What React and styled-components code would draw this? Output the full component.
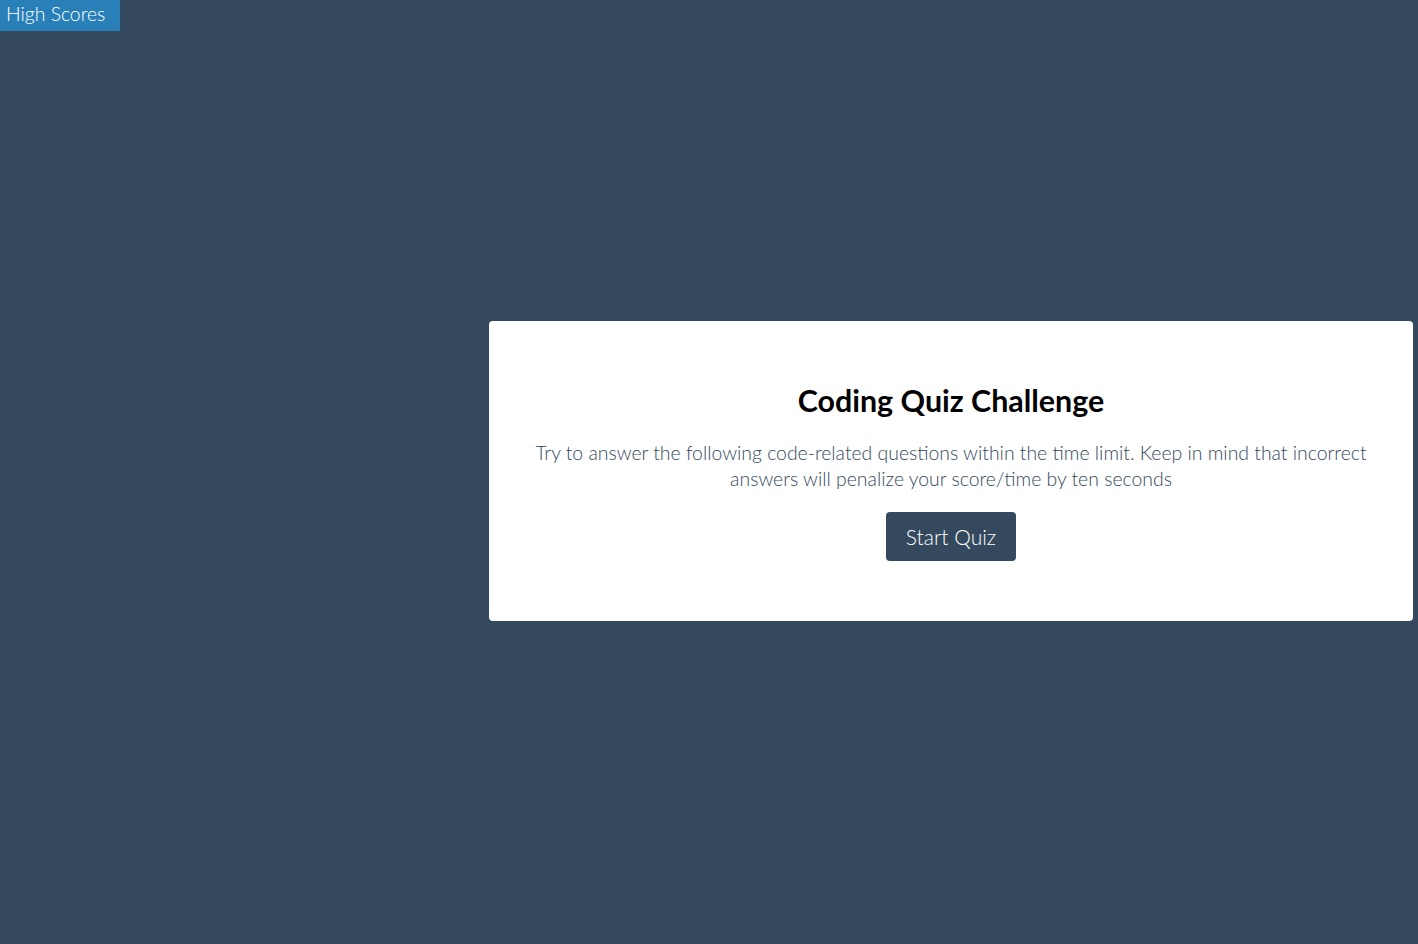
import styled, { createGlobalStyle } from "styled-components";

//Styles
const GlobalStyle = createGlobalStyle`
    html, body {
        margin: 0;
        padding: 0;
        height: 100%;
    }

    body {
        background: #34495e;
        font-family: Lato, "Open Sans", sans-serif;
    }
`

const Page = styled.div`
    min-height: 944px;
    display: flex;
    flex-direction: column;
`

const Header = styled.header`
    display: flex;
`

const ScoresLink = styled.a`
    display: block;
    background: #2980b9;
    color: white;
    font-size: 19.4px;
    font-weight: 300;
    height: 31px;
    line-height: 28px;
    padding: 0 6px;
    width: 108px;
    text-decoration: none;
    cursor: pointer;
`

const Main = styled.main`
    flex: 1;
    display: flex;
    align-items: center;
    justify-content: flex-end;
    padding: 0 5px 33px 0;
`

const Card = styled.section`
    width: 924px;
    height: 300px;
    box-sizing: border-box;
    background: white;
    border-radius: 4px;
    display: flex;
    flex-direction: column;
    align-items: center;
    padding: 57px 40px 0;
    text-align: center;
`

const Title = styled.h1`
    margin: 0;
    font-size: 30.4px;
    font-weight: 700;
    color: black;
    line-height: 44px;
`

const Intro = styled.p`
    margin: 18px 0 20px;
    font-size: 19.4px;
    font-weight: 300;
    line-height: 26px;
    color: #34495e;
`

const Button = styled.button`
    width: 130px;
    height: 49px;
    border: none;
    border-radius: 4px;
    background: #34495e;
    color: white;
    font-family: inherit;
    font-size: 21px;
    font-weight: 300;
    cursor: pointer;
`

//Component
function App() {
    return (
        <>
            <GlobalStyle />
            <Page>
                <Header>
                    <ScoresLink>High Scores</ScoresLink>
                </Header>
                <Main>
                    <Card>
                        <Title>Coding Quiz Challenge</Title>
                        <Intro>
                            Try to answer the following code-related questions within the time limit. Keep in mind that incorrect answers will penalize your score/time by ten seconds
                        </Intro>
                        <Button>Start Quiz</Button>
                    </Card>
                </Main>
            </Page>
        </>
    )
}

export default App
